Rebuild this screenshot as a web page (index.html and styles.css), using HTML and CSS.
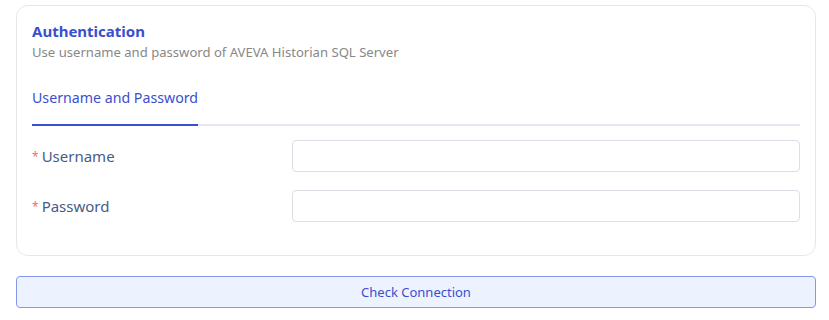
FILE: index.html
```html
<!DOCTYPE html>
<html lang="en">
<head>
    <meta charset="UTF-8">
    <meta name="viewport" content="width=device-width, initial-scale=1.0">
    <title>Authentication</title>
    <link rel="stylesheet" href="styles.css">
</head>
<body>
    <div class="container">
        <div class="card">
            <h2 class="card-title">Authentication</h2>
            <p class="card-desc">Use username and password of AVEVA Historian SQL Server</p>

            <div class="tabs">
                <div class="tab active">Username and Password</div>
            </div>

            <form class="form">
                <div class="form-row">
                    <label for="username"><span class="req">*</span>Username</label>
                    <input type="text" id="username">
                </div>
                <div class="form-row">
                    <label for="password"><span class="req">*</span>Password</label>
                    <input type="password" id="password">
                </div>
            </form>
        </div>

        <button type="button" class="check-btn">Check Connection</button>
    </div>
</body>
</html>
```

FILE: styles.css
```css
body {
    font-family: "Noto Sans", "Open Sans", sans-serif;
    margin: 0;
    padding: 0;
    background-color: #fff;
}
.container {
    padding: 5px 13px 0 16px;
}
.card {
    border: 1px solid #e6e7eb;
    border-radius: 12px;
    padding: 14px 15px 33px 15px;
}
.card-title {
    margin: 0;
    font-size: 15px;
    font-weight: bold;
    line-height: 22px;
    color: #3a4fd0;
}
.card-desc {
    margin: 0;
    font-size: 13.1px;
    line-height: 20px;
    color: #888;
}
.tabs {
    margin-top: 18px;
    border-bottom: 2px solid #e4e7ed;
    display: flex;
}
.tab {
    font-size: 14.2px;
    color: #3a4fd0;
    padding: 8px 0 17px 0;
    margin-bottom: -2px;
}
.tab.active {
    border-bottom: 2px solid #3a4fd0;
}
.form {
    margin-top: 14px;
}
.form-row {
    display: flex;
    align-items: center;
    margin-bottom: 18px;
}
.form-row:last-child {
    margin-bottom: 0;
}
.form-row label {
    width: 260px;
    font-size: 15px;
    color: #4a5b85;
}
.req {
    color: #f56c6c;
    font-size: 12px;
    margin-right: 3px;
    vertical-align: 1px;
}
.form-row input {
    flex: 1;
    height: 32px;
    padding: 0 10px;
    border: 1px solid #dcdfe6;
    border-radius: 4px;
    box-sizing: border-box;
}
.check-btn {
    display: block;
    width: 100%;
    margin-top: 20px;
    height: 32px;
    font-family: inherit;
    font-size: 13px;
    color: #3a4fd0;
    background-color: #ecf3ff;
    border: 1px solid #8696ec;
    border-radius: 4px;
    cursor: pointer;
}
```
